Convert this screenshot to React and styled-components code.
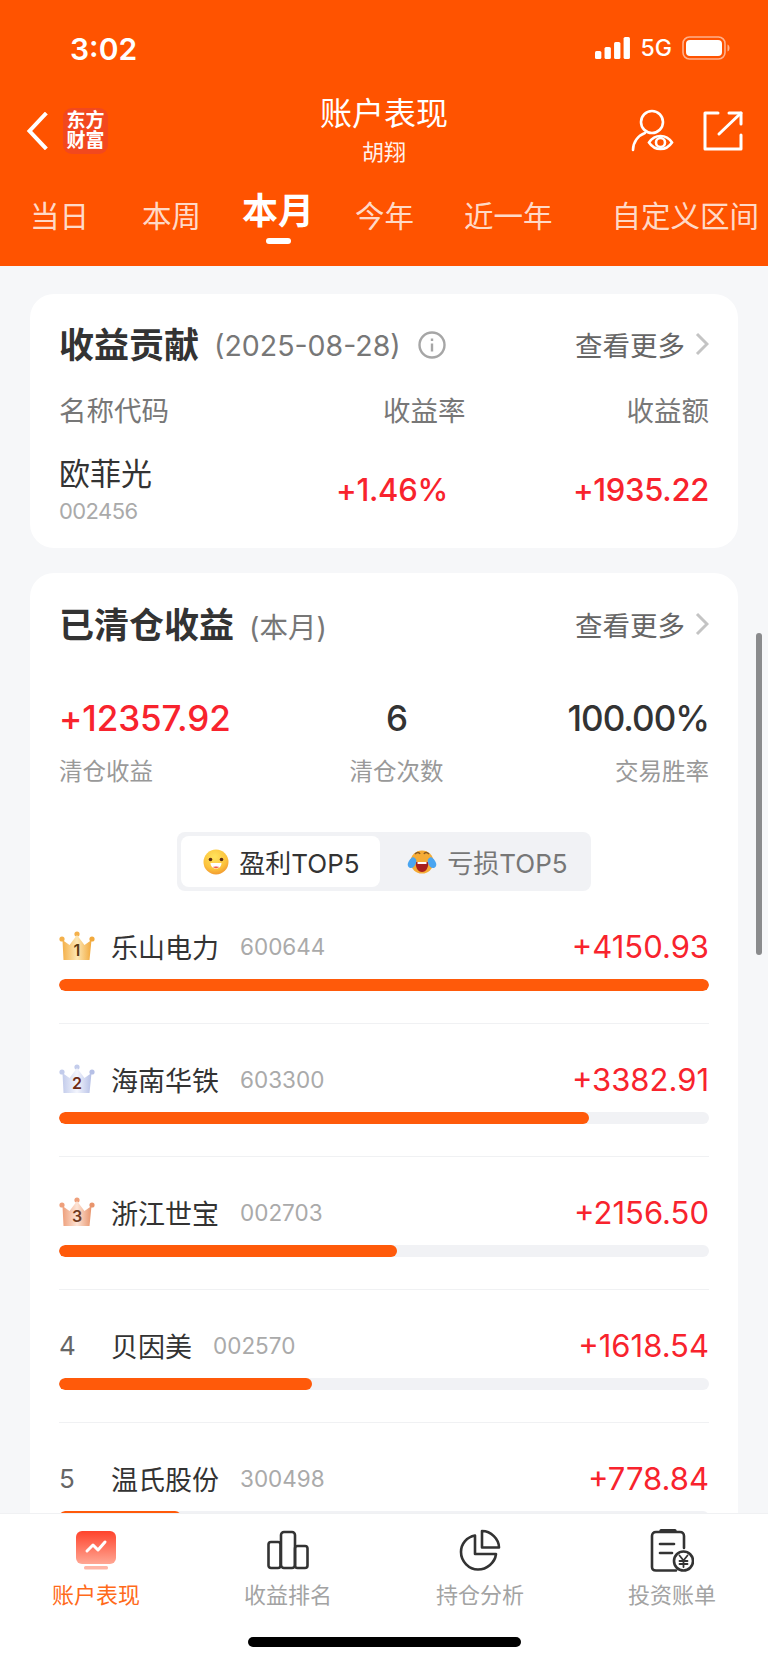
import React from "react";
import styled, { createGlobalStyle } from "styled-components";

const GlobalStyle = createGlobalStyle`
  html, body {
    margin: 0;
    padding: 0;
    background: #f6f7f9;
    font-family: Inter, "Noto Sans CJK SC", sans-serif;
  }
  * { box-sizing: border-box; }
`;

const ORANGE = "#ff5300";
const RED = "#f8232d";

const IconBack = () => (
  <svg width="22" height="38" viewBox="0 0 22 38" fill="none">
    <path d="M19 2.500 3.500 19 19 35.500" stroke="#fff" strokeWidth="4" strokeLinecap="square" strokeLinejoin="miter" />
  </svg>
);

const IconWatch = () => (
  <svg width="44" height="44" viewBox="0 0 44 44" fill="none" stroke="#fff" strokeWidth="2.600" strokeLinecap="round">
    <circle cx="21" cy="13" r="11" />
    <path d="M2 41c0-8 5-14.500 12-17" />
    <path d="M18 33.500c3-4.500 7-6.500 11.500-6.500s8.500 2 11.500 6.500c-3 4.500-7 6.500-11.500 6.500S21 38 18 33.500Z" fill={ORANGE} />
    <circle cx="29.500" cy="33.500" r="4.500" />
  </svg>
);

const IconShare = () => (
  <svg width="42" height="42" viewBox="0 0 42 42" fill="none" stroke="#fff" strokeWidth="3" strokeLinecap="round" strokeLinejoin="round">
    <path d="M16 3H3v36h36V25" />
    <path d="M17 24 39 3" />
    <path d="M27 3h12v11" />
  </svg>
);

const IconSignal = () => (
  <svg width="36" height="22" viewBox="0 0 34 22" preserveAspectRatio="none" fill="#fff">
    <rect x="0" y="14" width="6" height="8" rx="1.500" />
    <rect x="9" y="10" width="6" height="12" rx="1.500" />
    <rect x="18" y="5" width="6" height="17" rx="1.500" />
    <rect x="27" y="0" width="6" height="22" rx="1.500" />
  </svg>
);

const IconBattery = () => (
  <svg width="48" height="24" viewBox="0 0 48 24" fill="none">
    <rect x="1" y="1" width="42" height="22" rx="6.500" stroke="#ffb08a" strokeWidth="1.600" />
    <rect x="4" y="4" width="36" height="16" rx="4" fill="#fff" />
    <path d="M45.500 8.500c1.500.5 2 2 2 3.500s-.5 3-2 3.500Z" fill="#ffb08a" />
  </svg>
);

const IconInfo = () => (
  <svg width="28" height="28" viewBox="0 0 28 28" fill="none" stroke="#a6a6a6" strokeWidth="2.400">
    <circle cx="14" cy="14" r="12.500" />
    <path d="M14 12.500v8" />
    <path d="M14 7.500v2.500" />
  </svg>
);

const IconMore = () => (
  <svg width="14" height="24" viewBox="0 0 14 24" fill="none">
    <path d="M2 2l10 10-10 10" stroke="#c4c4c4" strokeWidth="3" />
  </svg>
);

const crownColors = {
  1: { side: "#f4b04a", mid: "#fde7b4", base: "#f2a93c", text: "#5b3a10" },
  2: { side: "#c3cceb", mid: "#f3f5fd", base: "#b6c0e6", text: "#6e2a16" },
  3: { side: "#ee9f7b", mid: "#fde4d6", base: "#e8946c", text: "#6f3a22" },
};

const Crown = ({ n }) => {
  const c = crownColors[n];
  return (
    <CrownBox>
      <svg width="36" height="30" viewBox="0 0 36 30">
        <defs>
          <linearGradient id={`crown${n}`} x1="0" y1="0" x2="1" y2="0">
            <stop offset="0" stopColor={c.side} />
            <stop offset="0.5" stopColor={c.mid} />
            <stop offset="1" stopColor={c.base} />
          </linearGradient>
        </defs>
        <circle cx="3" cy="8" r="2.600" fill={c.side} />
        <circle cx="18" cy="3" r="2.600" fill={c.side} />
        <circle cx="33" cy="8" r="2.600" fill={c.base} />
        <path d="M3.500 9l7 5L18 4l7.500 10 7-5-2 20h-26Z" fill={`url(#crown${n})`} />
      </svg>
      <CrownNum $color={c.text}>{n}</CrownNum>
    </CrownBox>
  );
};

const SmileFace = () => (
  <svg width="26" height="26" viewBox="0 0 26 26">
    <defs>
      <radialGradient id="smile" cx="0.45" cy="0.3" r="0.8">
        <stop offset="0" stopColor="#ffe45c" />
        <stop offset="0.6" stopColor="#fcc23c" />
        <stop offset="1" stopColor="#ee8a2c" />
      </radialGradient>
    </defs>
    <circle cx="13" cy="13" r="12.500" fill="url(#smile)" />
    <circle cx="7.500" cy="10.500" r="1.800" fill="#5a2c16" />
    <circle cx="18.500" cy="10.500" r="1.800" fill="#5a2c16" />
    <path d="M7.500 14h11c0 3.500-2.500 5.500-5.500 5.500S7.500 17.500 7.500 14Z" fill="#fff" />
    <path d="M10 18c1-.8 5-.8 6 0-1 1.500-5 1.500-6 0Z" fill="#f0584a" />
  </svg>
);

const CryFace = () => (
  <svg width="30" height="26" viewBox="0 0 30 26">
    <circle cx="15" cy="13" r="11.500" fill="#f5ab35" />
    <path d="M8 5c2-2 4-2 5 0M17 5c1-2 3-2 5 0" stroke="#8a5a20" strokeWidth="1.600" fill="none" />
    <path d="M9 13h12c1 5-2 10-6 10s-7-5-6-10Z" fill="#a8201e" />
    <path d="M10.500 13h9v2h-9Z" fill="#fff" />
    <path d="M6 8c3 1 4 3 3 6-1 3-3 5-5 5S0 17 1 14s3-5 5-6Z" fill="#4aa5f0" />
    <path d="M24 8c-3 1-4 3-3 6 1 3 3 5 5 5s4-2 3-5-3-5-5-6Z" fill="#4aa5f0" />
  </svg>
);

const IconPerformance = () => (
  <svg width="40" height="40" viewBox="0 0 40 40">
    <defs>
      <linearGradient id="perf" x1="0" y1="0" x2="0" y2="1">
        <stop offset="0" stopColor="#ff432c" />
        <stop offset="1" stopColor="#ffa794" />
      </linearGradient>
    </defs>
    <rect x="0" y="1" width="40" height="33" rx="6" fill="url(#perf)" />
    <rect x="8" y="36" width="24" height="3.500" rx="1.500" fill="#ffb5a6" />
    <path d="M11 21l6-6 5 5 7-8" stroke="#fff" strokeWidth="3" fill="none" strokeLinecap="round" strokeLinejoin="round" />
  </svg>
);

const IconBars = () => (
  <svg width="42" height="40" viewBox="0 0 42 40" fill="none" stroke="#333" strokeWidth="2.600" strokeLinejoin="round">
    <rect x="1.500" y="12" width="12" height="26" rx="2.500" />
    <rect x="14" y="2" width="14" height="36" rx="3" />
    <rect x="28" y="16" width="12.500" height="22" rx="2.500" />
  </svg>
);

const IconPie = () => (
  <svg width="42" height="42" viewBox="0 0 42 42" fill="none" stroke="#333" strokeWidth="2.600" strokeLinejoin="round">
    <path d="M16 6.500C8 8 2 14.500 2 23c0 9.500 8 17.500 17 17.500S36 33.500 37 25H16Z" />
    <path d="M23 2c9 0 17 8 17 16.500H23Z" />
  </svg>
);

const IconBill = () => (
  <svg width="44" height="44" viewBox="0 0 44 44" fill="none" stroke="#333" strokeWidth="2.600" strokeLinecap="round" strokeLinejoin="round">
    <path d="M34 20V8c0-2.500-1.500-4-4-4H6C3.500 4 2 5.500 2 8v31c0 2.500 1.500 3.500 4 3.500h20" />
    <path d="M11 2.500h14" strokeWidth="3.200" />
    <path d="M10 16h14" />
    <path d="M10 25h12" />
    <circle cx="33.500" cy="33" r="9.500" fill="#fff" />
    <path d="M29.500 27.500l4 5 4-5M33.500 32.500V39M29.500 33h8M29.500 36h8" strokeWidth="1.800" />
  </svg>
);

const tabs = [
  { label: "当日", gap: 0 },
  { label: "本周", gap: 53 },
  { label: "本月", gap: 41, active: true },
  { label: "今年", gap: 41 },
  { label: "近一年", gap: 50 },
  { label: "自定义区间", gap: 59 },
];

const rows = [
  { rank: 1, name: "乐山电力", code: "600644", value: 4150.93 },
  { rank: 2, name: "海南华铁", code: "603300", value: 3382.91 },
  { rank: 3, name: "浙江世宝", code: "002703", value: 2156.5 },
  { rank: 4, name: "贝因美", code: "002570", value: 1618.54 },
  { rank: 5, name: "温氏股份", code: "300498", value: 778.84 },
];

const navItems = [
  { label: "账户表现", icon: <IconPerformance />, active: true },
  { label: "收益排名", icon: <IconBars /> },
  { label: "持仓分析", icon: <IconPie /> },
  { label: "投资账单", icon: <IconBill /> },
];

export default function App() {
  return (
    <Page>
      <GlobalStyle />
      <Header>
        <StatusBar>
          <Time>3:02</Time>
          <StatusRight>
            <IconSignal />
            <Network>5G</Network>
            <IconBattery />
          </StatusRight>
        </StatusBar>
        <NavBar>
          <NavLeft>
            <IconBack />
            <Logo>
              东方
              <br />
              财富
            </Logo>
          </NavLeft>
          <TitleBox>
            <Title>账户表现</Title>
            <SubTitle>胡翔</SubTitle>
          </TitleBox>
          <NavRight>
            <IconWatch />
            <IconShare />
          </NavRight>
        </NavBar>
        <Tabs>
          {tabs.map((t) => (
            <Tab key={t.label} $gap={t.gap} $active={t.active}>
              {t.label}
            </Tab>
          ))}
        </Tabs>
      </Header>

      <Content>
        <ScrollThumb />
        <Card>
          <CardHead>
            <CardTitle>收益贡献</CardTitle>
            <CardNote>(2025-08-28)</CardNote>
            <IconInfo />
            <More>
              查看更多
              <IconMore />
            </More>
          </CardHead>
          <ColumnRow>
            <ColumnName>名称代码</ColumnName>
            <ColumnLabel $gap={0}>收益率</ColumnLabel>
            <ColumnLabel $gap={161}>收益额</ColumnLabel>
          </ColumnRow>
          <StockRow>
            <StockInfo>
              <StockName>欧菲光</StockName>
              <StockCode>002456</StockCode>
            </StockInfo>
            <StockValue $gap={0}>+1.46%</StockValue>
            <StockValue $gap={125}>+1935.22</StockValue>
          </StockRow>
        </Card>

        <Card $tall>
          <CardHead>
            <CardTitle>已清仓收益</CardTitle>
            <CardNote>(本月)</CardNote>
            <More>
              查看更多
              <IconMore />
            </More>
          </CardHead>
          <Stats>
            <Stat>
              <StatValue $red>+12357.92</StatValue>
              <StatLabel>清仓收益</StatLabel>
            </Stat>
            <Stat $align="center">
              <StatValue>6</StatValue>
              <StatLabel>清仓次数</StatLabel>
            </Stat>
            <Stat $align="flex-end">
              <StatValue>100.00%</StatValue>
              <StatLabel>交易胜率</StatLabel>
            </Stat>
          </Stats>
          <Toggle>
            <ToggleItem $active>
              <SmileFace />
              盈利TOP5
            </ToggleItem>
            <ToggleItem>
              <CryFace />
              亏损TOP5
            </ToggleItem>
          </Toggle>
          <List>
            {rows.map((r) => (
              <Row key={r.code}>
                <RowHead>
                  <RankSlot>{r.rank <= 3 ? <Crown n={r.rank} /> : r.rank}</RankSlot>
                  <RowName>{r.name}</RowName>
                  <RowCode>{r.code}</RowCode>
                  <RowValue>+{r.value.toFixed(2)}</RowValue>
                </RowHead>
                <Track>
                  <Fill style={{ width: `${(r.value / rows[0].value) * 100}%` }} />
                </Track>
              </Row>
            ))}
          </List>
        </Card>
      </Content>

      <BottomNav>
        <NavItems>
          {navItems.map((n) => (
            <NavItem key={n.label}>
              <NavIcon>{n.icon}</NavIcon>
              <NavLabel $active={n.active}>{n.label}</NavLabel>
            </NavItem>
          ))}
        </NavItems>
        <HomeBar />
      </BottomNav>
    </Page>
  );
}

const Page = styled.div`
  width: 768px;
  height: 1663px;
  display: flex;
  flex-direction: column;
  overflow: hidden;
  background: #f6f7f9;
`;

const Header = styled.header`
  height: 266px;
  flex: none;
  background: ${ORANGE};
  color: #fff;
`;

const StatusBar = styled.div`
  height: 98px;
  padding: 31px 38px 0 70px;
  display: flex;
  align-items: flex-start;
  justify-content: space-between;
`;

const Time = styled.span`
  font-size: 30px;
  line-height: 36px;
  font-weight: 600;
`;

const StatusRight = styled.div`
  display: flex;
  align-items: center;
  height: 34px;
  gap: 10px;
`;

const Network = styled.span`
  font-size: 23px;
  font-weight: 500;
`;

const NavBar = styled.div`
  height: 72px;
  padding: 0 24px 6px 26px;
  display: flex;
  align-items: center;
  justify-content: space-between;
  position: relative;
`;

const NavLeft = styled.div`
  display: flex;
  align-items: center;
  gap: 15px;
`;

const Logo = styled.div`
  width: 45px;
  height: 46px;
  border-radius: 9px;
  background: #f2481e;
  font-size: 19px;
  line-height: 20px;
  font-weight: 700;
  text-align: center;
  padding-top: 3px;
`;

const TitleBox = styled.div`
  position: absolute;
  left: 0;
  right: 0;
  top: -6px;
  text-align: center;
  pointer-events: none;
`;

const Title = styled.div`
  font-size: 32px;
  line-height: 44px;
`;

const SubTitle = styled.div`
  font-size: 22px;
  line-height: 32px;
  opacity: 0.92;
`;

const NavRight = styled.div`
  display: flex;
  align-items: center;
  gap: 27px;
`;

const Tabs = styled.nav`
  display: flex;
  align-items: flex-end;
  padding-left: 30px;
  height: 74px;
  white-space: nowrap;
`;

const Tab = styled.div`
  position: relative;
  margin-left: ${(p) => p.$gap}px;
  font-size: ${(p) => (p.$active ? 36 : 29.5)}px;
  font-weight: ${(p) => (p.$active ? 700 : 400)};
  line-height: 44px;
  color: ${(p) => (p.$active ? "#fff" : "rgba(255, 255, 255, 0.8)")};
  padding-bottom: ${(p) => (p.$active ? 11 : 6)}px;
  &::after {
    content: ${(p) => (p.$active ? '""' : "none")};
    position: absolute;
    left: 50%;
    bottom: 0;
    width: 25px;
    height: 6px;
    margin-left: -12px;
    border-radius: 3px;
    background: #fff;
  }
`;

const Content = styled.main`
  flex: 1;
  min-height: 0;
  overflow: hidden;
  position: relative;
  padding: 28px 30px 0;
  display: flex;
  flex-direction: column;
  gap: 25px;
`;

const ScrollThumb = styled.div`
  position: absolute;
  left: 756px;
  top: 367px;
  width: 6px;
  height: 322px;
  border-radius: 3px;
  background: #8a8b8d;
`;

const Card = styled.section`
  flex: none;
  background: #fff;
  border-radius: 24px 24px ${(p) => (p.$tall ? "0 0" : "24px 24px")};
  padding: ${(p) => (p.$tall ? "31px" : "30px")} 29px 0 29px;
  height: ${(p) => (p.$tall ? "auto" : "254px")};
`;

const CardHead = styled.div`
  display: flex;
  align-items: center;
  height: 42px;
`;

const CardTitle = styled.h2`
  margin: 0 15px 0 0;
  font-size: 35px;
  line-height: 42px;
  font-weight: 700;
  color: #333;
`;

const CardNote = styled.span`
  font-size: 28.500px;
  color: #777;
  margin-right: 17px;
`;

const More = styled.span`
  margin-left: auto;
  display: flex;
  align-items: center;
  gap: 10px;
  padding-bottom: 3px;
  font-size: 27.5px;
  color: #666;
`;

const ColumnRow = styled.div`
  display: flex;
  margin-top: 24px;
  height: 38px;
  align-items: center;
  font-size: 27.5px;
  color: #777;
`;

const ColumnName = styled.span`
  flex: 1;
`;

const ColumnLabel = styled.span`
  margin-left: ${(p) => p.$gap}px;
`;

const StockRow = styled.div`
  display: flex;
  align-items: center;
  margin-top: 24px;
`;

const StockInfo = styled.div`
  flex: 1;
  display: flex;
  flex-direction: column;
`;

const StockName = styled.span`
  font-size: 31px;
  line-height: 44px;
  color: #333;
`;

const StockCode = styled.span`
  font-size: 22px;
  line-height: 30px;
  letter-spacing: -0.6px;
  color: #aaa;
`;

const StockValue = styled.span`
  margin-left: ${(p) => p.$gap}px;
  font-size: 31px;
  font-weight: 500;
  color: ${RED};
  letter-spacing: -0.3px;
`;

const Stats = styled.div`
  display: grid;
  grid-template-columns: 291px 93px 1fr;
  margin-top: 50px;
`;

const Stat = styled.div`
  display: flex;
  flex-direction: column;
  align-items: ${(p) => p.$align || "flex-start"};
  white-space: nowrap;
`;

const StatValue = styled.span`
  font-size: 35px;
  line-height: 44px;
  font-weight: 500;
  letter-spacing: ${(p) => (p.$red ? -0.1 : -1)}px;
  color: ${(p) => (p.$red ? RED : "#333")};
`;

const StatLabel = styled.span`
  margin-top: 16px;
  font-size: 23.5px;
  line-height: 32px;
  color: #999;
`;

const Toggle = styled.div`
  width: 414px;
  height: 59px;
  margin: 44px 0 0 118px;
  padding: 4px;
  display: flex;
  background: #f1f2f5;
  border-radius: 8px;
`;

const ToggleItem = styled.div`
  width: ${(p) => (p.$active ? 199 : 207)}px;
  padding-left: ${(p) => (p.$active ? 2 : 8)}px;
  display: flex;
  align-items: center;
  justify-content: center;
  gap: 10px;
  border-radius: 8px;
  font-size: 26px;
  color: ${(p) => (p.$active ? "#333" : "#777")};
  background: ${(p) => (p.$active ? "#fff" : "transparent")};
`;

const List = styled.div`
  margin-top: 0;
`;

const Row = styled.div`
  padding: 37px 0 32px;
  border-bottom: 1px solid #f0f1f3;
`;

const RowHead = styled.div`
  display: flex;
  align-items: center;
  height: 36px;
  margin-bottom: 15px;
`;

const RankSlot = styled.div`
  width: 52px;
  flex: none;
  font-size: 26px;
  color: #666;
`;

const CrownBox = styled.div`
  position: relative;
  width: 36px;
  height: 30px;
`;

const CrownNum = styled.span`
  position: absolute;
  left: 0;
  right: 0;
  top: 10px;
  text-align: center;
  font-size: 16px;
  line-height: 18px;
  font-weight: 600;
  color: ${(p) => p.$color};
`;

const RowName = styled.span`
  font-size: 27px;
  color: #333;
  margin-right: 21px;
`;

const RowCode = styled.span`
  font-size: 22.5px;
  color: #aaa;
`;

const RowValue = styled.span`
  margin-left: auto;
  font-size: 31px;
  color: ${RED};
`;

const Track = styled.div`
  height: 12px;
  background: #f1f2f5;
  border-radius: 6px;
  overflow: hidden;
`;

const Fill = styled.div`
  height: 100%;
  background: #ff5a0a;
  border-radius: 6px;
`;

const BottomNav = styled.footer`
  flex: none;
  height: 150px;
  background: #fff;
  border-top: 1px solid #f0f1f3;
  position: relative;
  z-index: 1;
`;

const NavItems = styled.div`
  display: grid;
  grid-template-columns: repeat(4, 1fr);
  padding-top: 14px;
`;

const NavItem = styled.div`
  display: flex;
  flex-direction: column;
  align-items: center;
`;

const NavIcon = styled.div`
  height: 44px;
  display: flex;
  align-items: center;
  justify-content: center;
`;

const NavLabel = styled.span`
  margin-top: 7px;
  font-size: 22px;
  line-height: 32px;
  color: ${(p) => (p.$active ? "#ff6a1a" : "#a3a3a3")};
`;

const HomeBar = styled.div`
  position: absolute;
  left: 248px;
  bottom: 16px;
  width: 273px;
  height: 10px;
  border-radius: 5px;
  background: #000;
`;
